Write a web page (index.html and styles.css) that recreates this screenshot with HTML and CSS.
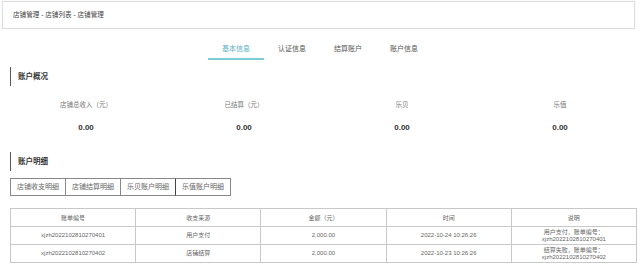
FILE: index.html
```html
<html>

<head>
    <meta http-equiv="Content-Type" content="text/html; charset=utf-8">
    <title>店铺管理</title>

    <link rel="stylesheet" href="styles.css">
</head>

<body>
    <div class="crumb">店铺管理 - 店铺列表 - 店铺管理</div>

    <div class="tabs">
        <div class="tab active">基本信息</div>
        <div class="tab">认证信息</div>
        <div class="tab">结算账户</div>
        <div class="tab">账户信息</div>
    </div>

    <div class="section-title">账户概况</div>
    <div class="stats">
        <div class="stat">
            <div class="label">店铺总收入（元）</div>
            <div class="value">0.00</div>
        </div>
        <div class="stat">
            <div class="label">已结算（元）</div>
            <div class="value">0.00</div>
        </div>
        <div class="stat">
            <div class="label">乐贝</div>
            <div class="value">0.00</div>
        </div>
        <div class="stat">
            <div class="label">乐值</div>
            <div class="value">0.00</div>
        </div>
    </div>

    <div class="section-title detail">账户明细</div>
    <div class="btns">
        <div class="btn">店铺收支明细</div>
        <div class="btn">店铺结算明细</div>
        <div class="btn">乐贝账户明细</div>
        <div class="btn current">乐值账户明细</div>
    </div>

    <table class="list">
        <tr>
            <th>账单编号</th>
            <th>收支来源</th>
            <th>金额（元）</th>
            <th>时间</th>
            <th>说明</th>
        </tr>
        <tr>
            <td>xjzh2022102810270401</td>
            <td>用户支付</td>
            <td>2,000.00</td>
            <td>2022-10-24 10:26:26</td>
            <td class="note">用户支付，账单编号：xjzh2022102810270401</td>
        </tr>
        <tr>
            <td>xjzh2022102810270402</td>
            <td>店铺结算</td>
            <td>2,000.00</td>
            <td>2022-10-23 10:26:26</td>
            <td class="note">结算失败，账单编号：xjzh2022102810270402</td>
        </tr>
    </table>
</body>

</html>
```

FILE: styles.css
```css
body {
    margin: 0;
    font-family: "Liberation Sans", "Noto Sans CJK SC", sans-serif;
    color: #333;
    background: #fff;
}

.crumb {
    margin: 1px 5px 0 2px;
    height: 26px;
    line-height: 26px;
    padding-left: 10px;
    border: 1px solid #ddd;
    box-shadow: 0 0 1px #e6e6e6;
    font-size: 6.6px;
    color: #444;
}

.tabs {
    display: flex;
    justify-content: center;
    margin-top: 11px;
}

.tab {
    width: 56px;
    height: 18px;
    line-height: 18px;
    text-align: center;
    font-size: 7px;
    color: #555;
    border-bottom: 2px solid transparent;
}

.tab.active {
    color: #5ab0c8;
    border-bottom-color: #7ccdd3;
}

.section-title {
    margin: 7px 0 0 10px;
    height: 19px;
    line-height: 19px;
    padding-left: 7px;
    border-left: 1px solid #555;
    font-size: 7.5px;
    font-weight: bold;
    color: #333;
}

.section-title.detail {
    margin-top: 18px;
}

.stats {
    display: grid;
    grid-template-columns: repeat(4, 1fr);
    margin: 0 1px 0 7px;
    text-align: center;
}

.label {
    margin-top: 13px;
    line-height: 12px;
    font-size: 6.5px;
    color: #777;
}

.value {
    margin-top: 11px;
    line-height: 12px;
    font-size: 8px;
    font-weight: bold;
    color: #333;
}

.btns {
    display: flex;
    margin: 7px 0 0 10px;
}

.btn {
    width: 54px;
    height: 16px;
    line-height: 16px;
    text-align: center;
    border: 1px solid #888;
    margin-right: -1px;
    font-size: 7px;
    color: #666;
}

.btn.current {
    border-left-color: #444;
}

.list {
    margin: 12px 3px 0 10px;
    width: 627px;
    table-layout: fixed;
    border-collapse: collapse;
    font-size: 6px;
    color: #666;
}

.list th,
.list td {
    border: 1px solid #c8c8c8;
    text-align: center;
    font-weight: normal;
    padding: 0 2px;
}

.list th {
    height: 18px;
}

.list td {
    height: 18px;
    line-height: 7px;
}
```
